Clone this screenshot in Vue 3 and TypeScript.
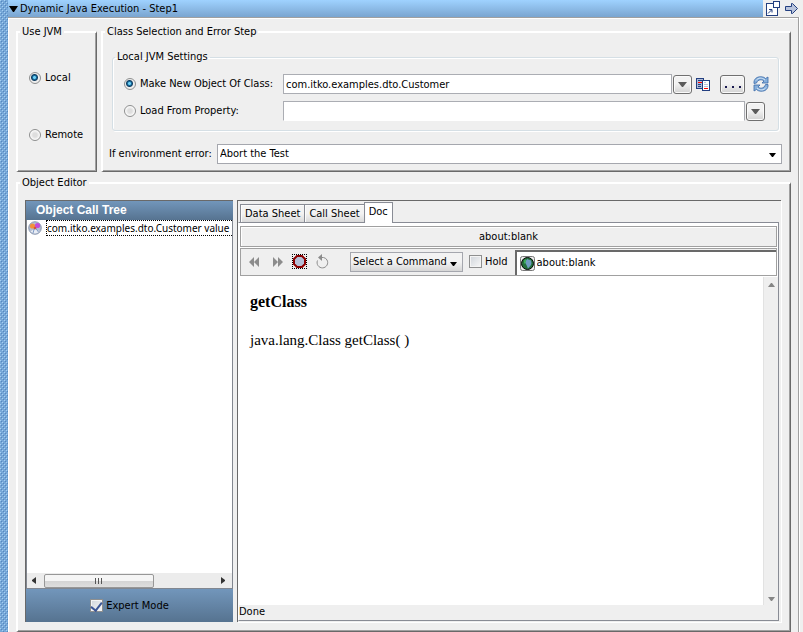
<script setup lang="ts">
import { ref } from 'vue'

type Jvm = 'local' | 'remote'
type Source = 'class' | 'property'

const jvm = ref<Jvm>('local')
const source = ref<Source>('class')
const className = ref('com.itko.examples.dto.Customer')
const property = ref('')
const onError = ref('Abort the Test')
const tabs = ['Data Sheet', 'Call Sheet', 'Doc']
const activeTab = ref('Doc')
const command = ref('Select a Command')
const hold = ref(false)
const address = ref('about:blank')
const expert = ref(true)
</script>

<template>
  <div class="window">
    <div class="grip"></div>
    <div class="step">
      <header class="titlebar">
        <h1 class="title">
          <svg class="caret" viewBox="0 0 9 6"><path d="M0 0h9L5 6H4z" fill="#000" /></svg>
          Dynamic Java Execution - Step1
        </h1>
        <div class="window-tools">
          <button class="plain" type="button" aria-label="Pop out">
            <svg width="14" height="15" viewBox="0 0 14 15">
              <rect x="0.5" y="2.5" width="11" height="12" fill="#fff" stroke="#233f80" />
              <rect x="7.5" y="0.5" width="6" height="6" fill="#fff" stroke="#233f80" />
              <path d="M2 12.5 5.5 9M3 8.5h3v3" fill="none" stroke="#233f80" />
            </svg>
          </button>
          <button class="plain" type="button" aria-label="Next">
            <svg width="13" height="11" viewBox="0 0 13 11">
              <path d="M.5 3.5h6v-3h1l5 5-5 5h-1v-3h-6z" fill="#b9c4dc" stroke="#233f80" />
            </svg>
          </button>
        </div>
      </header>

      <main class="body">
        <div class="settings">
          <fieldset class="group jvm">
            <legend>Use JVM</legend>
            <label class="choice"><input v-model="jvm" type="radio" name="jvm" value="local" />Local</label>
            <label class="choice"><input v-model="jvm" type="radio" name="jvm" value="remote" />Remote</label>
          </fieldset>

          <fieldset class="group selection">
            <legend>Class Selection and Error Step</legend>
            <fieldset class="local">
              <legend>Local JVM Settings</legend>
              <div class="row">
                <label class="choice"><input v-model="source" type="radio" name="source" value="class" />Make New Object Of Class:</label>
                <input v-model="className" class="field" type="text" aria-label="Class name" />
                <button class="square" type="button" aria-label="Choose class">
                  <svg width="9" height="5" viewBox="0 0 9 5"><path d="M0 0h9L5 5H4z" fill="#5a5a5a" /></svg>
                </button>
                <button class="plain compare" type="button" aria-label="Browse classes">
                  <svg width="14" height="13" viewBox="0 0 14 13">
                    <rect x="0.5" y="0.5" width="7" height="10" fill="#aebbd8" stroke="#233f80" />
                    <path d="M2 2.5h4M2 6.5h3M2 8.5h3" stroke="#233f80" />
                    <path d="M2 4.5h4" stroke="#f00" />
                    <rect x="6.5" y="2.5" width="7" height="10" fill="#fff" stroke="#233f80" />
                    <path d="M8 4.500h2M8 6.500h4M8 8.500h4" stroke="#b9c4dc" />
                    <path d="M8 10.500h4" stroke="#f00" />
                  </svg>
                </button>
                <button class="square more" type="button" aria-label="More">
                  <svg width="16" height="2" viewBox="0 0 16 2"><path d="M0 0h2v2H0zM7 0h2v2H7zM14 0h2v2h-2z" fill="#1a1a50" /></svg>
                </button>
                <button class="plain refresh" type="button" aria-label="Refresh">
                  <svg width="16" height="16" viewBox="0 0 16 16">
                    <path d="M1 7.500C.5 3 4 .5 8 .8c2 0 3.500.7 4.500 1.700L15 1v6H9l2-2C9 3.200 5 3 3.500 7z" fill="#86afdb" stroke="#3a6aa8" stroke-width=".8" />
                    <path d="M15 8.500c.5 4.500-3 7-7 6.700-2 0-3.500-.7-4.500-1.700L1 15V9h6l-2 2c2 1.800 6 2 7.500-2.500z" fill="#86afdb" stroke="#3a6aa8" stroke-width=".8" />
                    <path d="M3 4.500C5 1.500 9 1.300 12 4M13 11.500C11 14.500 7 14.700 4 12" fill="none" stroke="#d3e5f6" />
                  </svg>
                </button>
              </div>
              <div class="row second">
                <label class="choice"><input v-model="source" type="radio" name="source" value="property" />Load From Property:</label>
                <input v-model="property" class="field open" type="text" aria-label="Property" />
                <button class="square" type="button" aria-label="Choose property">
                  <svg width="9" height="5" viewBox="0 0 9 5"><path d="M0 0h9L5 5H4z" fill="#5a5a5a" /></svg>
                </button>
              </div>
            </fieldset>
            <div class="error-row">
              <label for="on-error">If environment error:</label>
              <div class="combo">
                <select id="on-error" v-model="onError"><option>Abort the Test</option></select>
                <svg class="arrow" width="7" height="4" viewBox="0 0 7 4"><path d="M0 0h7L4 4H3z" /></svg>
              </div>
            </div>
          </fieldset>
        </div>

        <fieldset class="group editor">
          <legend>Object Editor</legend>
          <div class="panes">
            <section class="tree-pane">
              <h2 class="tree-head">Object Call Tree</h2>
              <div class="tree">
                <div class="node">
                  <svg width="14" height="14" viewBox="0 0 14 14">
                    <circle cx="7" cy="7" r="6.300" fill="#b4bed2" stroke="#7686a2" stroke-width=".8" />
                    <path d="M2.500 10.500q4.500-4 9 0-4.500 4-9 0" fill="#e9edf5" />
                    <path d="M6.500 7 5 12M7.500 7l3 4" stroke="#7b99c5" fill="none" />
                    <circle cx="4.500" cy="5" r="2.600" fill="#f2913c" />
                    <circle cx="9.500" cy="4.500" r="2.600" fill="#c34bd8" />
                    <path d="m5.500 7 1.500-1.500L8.500 7 7 8.500z" fill="#d64b2c" />
                  </svg>
                  <span class="node-name">com.itko.examples.dto.Customer value</span>
                </div>
              </div>
              <div class="hscroll">
                <svg width="4" height="7" viewBox="0 0 4 7"><path d="M4 0v7L0 4V3z" fill="#333" /></svg>
                <div class="thumb">
                  <svg width="8" height="6" viewBox="0 0 8 6"><path d="M.5 0v6M3.500 0v6M6.500 0v6" stroke="#555" /></svg>
                </div>
                <svg width="4" height="7" viewBox="0 0 4 7"><path d="M0 0v7l4-3V3z" fill="#333" /></svg>
              </div>
              <div class="expert">
                <label class="check"><input v-model="expert" type="checkbox" />Expert Mode</label>
              </div>
            </section>

            <section class="doc-pane">
              <div class="tabs" role="tablist">
                <button
                  v-for="tab in tabs"
                  :key="tab"
                  type="button"
                  role="tab"
                  class="tab"
                  :class="{ active: tab === activeTab }"
                  :aria-selected="tab === activeTab"
                  @click="activeTab = tab"
                >{{ tab }}</button>
              </div>
              <div class="browser">
                <div class="page-title">about:blank</div>
                <div class="toolbar">
                  <div class="nav">
                    <button class="plain" type="button" aria-label="Back">
                      <svg width="10" height="10" viewBox="0 0 10 10"><path d="M5 0v10L0 5zM10 0v10L5 5z" fill="#8c8c8c" /></svg>
                    </button>
                    <button class="plain" type="button" aria-label="Forward">
                      <svg width="10" height="10" viewBox="0 0 10 10"><path d="M0 0v10l5-5zM5 0v10l5-5z" fill="#8c8c8c" /></svg>
                    </button>
                    <button class="plain stop" type="button" aria-label="Stop">
                      <svg width="15" height="15" viewBox="0 0 15 15">
                        <path d="M0 .5h15M0 14.500h15M.5 0v15M14.500 0v15" fill="none" stroke="#000" stroke-dasharray="1 1" />
                        <path d="M5 2h5l3 3v5l-3 3H5l-3-3V5z" fill="#b4bfd6" stroke="#8b0000" stroke-width="2" />
                      </svg>
                    </button>
                    <button class="plain" type="button" aria-label="Reload">
                      <svg width="13" height="15" viewBox="0 0 13 15">
                        <path d="M1.500 6.500A5.300 5.300 0 1 0 11 6Q10 4 7.500 3.500H5" fill="none" stroke="#8c8c8c" />
                        <path d="M6 0v7L2 3.500z" fill="#8c8c8c" />
                      </svg>
                    </button>
                  </div>
                  <div class="combo command">
                    <select v-model="command" aria-label="Command"><option>Select a Command</option></select>
                    <svg class="arrow" width="7" height="4" viewBox="0 0 7 4"><path d="M0 0h7L4 4H3z" /></svg>
                  </div>
                  <label class="check"><input v-model="hold" type="checkbox" />Hold</label>
                  <div class="address">
                    <svg width="15" height="15" viewBox="0 0 15 15">
                      <rect x=".5" y=".5" width="14" height="14" rx="2" fill="#eee" stroke="#777" />
                      <circle cx="7.500" cy="7.500" r="6" fill="#23703c" stroke="#000" />
                      <path d="M7 3 11 4.500 11.500 7 11 9l-3 3.500L6.500 9 5 6.500z" fill="#6f9bc0" />
                      <path d="M4 4.500 6 3v3L4 8z" fill="#3fae5b" />
                    </svg>
                    <input v-model="address" type="text" aria-label="Address" />
                  </div>
                </div>
                <div class="view">
                  <article class="doc">
                    <h3>getClass</h3>
                    <p>java.lang.Class getClass( )</p>
                  </article>
                  <div class="vscroll">
                    <svg width="7" height="4" viewBox="0 0 7 4"><path d="M3 0h1l3 4H0z" fill="#858585" /></svg>
                    <svg width="7" height="4" viewBox="0 0 7 4"><path d="M0 0h7L4 4H3z" fill="#858585" /></svg>
                  </div>
                </div>
                <footer class="status">Done</footer>
              </div>
            </section>
          </div>
        </fieldset>
      </main>
    </div>
  </div>
</template>

<style>
body {
  background: #efefef;
}
</style>

<style scoped>
.window,
.window * {
  box-sizing: border-box;
}
.window {
  display: flex;
  min-height: 100vh;
  font-family: "DejaVu Sans Condensed", "Noto Sans", sans-serif;
  font-size: 11px;
  line-height: 14px;
  color: #000;
}
h1, h2, h3, p {
  margin: 0;
}
svg {
  display: block;
  flex: none;
}
input, select, button {
  font: inherit;
  color: inherit;
  margin: 0;
}
input[type="text"] {
  min-width: 0;
}
.grip {
  flex: 0 0 8px;
  background-color: #76a7d8;
  background-image:
    conic-gradient(at 1px 1px, transparent 75%, #a5d0f2 0),
    conic-gradient(at 1px 1px, transparent 75%, #5589be 0),
    conic-gradient(at 1px 1px, transparent 75%, #a5d0f2 0),
    conic-gradient(at 1px 1px, transparent 75%, #5589be 0);
  background-size: 4px 4px;
  background-position: 0 0, 1px 1px, 2px 2px, 3px 3px;
}
.step {
  flex: 1;
  min-width: 0;
  display: flex;
  flex-direction: column;
}
.titlebar {
  display: flex;
  height: 17px;
}
.title {
  flex: 1;
  display: flex;
  align-items: center;
  gap: 2px;
  padding-left: 1px;
  font-size: 11px;
  font-weight: normal;
  line-height: 17px;
  background: linear-gradient(#9fd2ff, #7aa5d0);
}
.caret {
  width: 9px;
  height: 6px;
}
.window-tools {
  display: flex;
  align-items: center;
  gap: 5px;
  padding: 0 5px 0 3px;
}
.plain {
  padding: 0;
  border: 0;
  background: none;
}
.body {
  flex: 1;
  display: flex;
  flex-direction: column;
  gap: 4px;
  margin-right: 4px;
  padding: 7px 7px 0 8px;
  border: solid #a0a0a0;
  border-width: 1px 1px 0 0;
  box-shadow: inset 1px 1px #fff, 1px 0 #fff;
}
.settings {
  display: flex;
  gap: 4px;
}
fieldset {
  min-width: 0;
  margin: 0;
  padding: 0;
}
legend {
  margin-left: calc(2px - var(--inset));
  padding: 0 2px;
  line-height: 14px;
}
.group {
  border: 2px solid #fff;
  border-right: 1px solid #696969;
  border-bottom: 1px solid #696969;
  box-shadow: inset -1px -1px #a0a0a0;
}
.jvm {
  --inset: 11px;
  flex: 0 0 81px;
  display: flex;
  flex-direction: column;
  padding: 32px 0 0 var(--inset);
  gap: 43px;
}
.choice {
  display: flex;
  align-items: center;
  gap: 4px;
  white-space: nowrap;
}
.choice input {
  appearance: none;
  width: 12px;
  height: 12px;
  border: 1px solid #8e8f8f;
  border-radius: 50%;
  background: radial-gradient(#dedede 0 2px, #fff 5px);
}
.choice input:checked {
  background: radial-gradient(circle at 45% 45%, #6fd1f5 0 1px, #156a9d 2px, #123e60 3px, #eee 4px);
}
.selection {
  --inset: 9px;
  flex: 1;
  padding: 11px 11px 7px var(--inset);
}
.local {
  --inset: 11px;
  border: 1px solid #d5dfe5;
  border-radius: 3px;
  box-shadow: 1px 1px #fff, inset 1px 1px #fff;
  padding: 10px 9px 9px var(--inset);
}
.row {
  display: flex;
  align-items: center;
}
.row .choice {
  flex: 0 0 159px;
}
.second {
  margin-top: 7px;
  padding-right: 4px;
}
.field {
  flex: 1;
  height: 20px;
  padding: 0 2px;
  border: 1px solid #abadb3;
  background: #fff;
}
.open {
  border-bottom-color: #fff;
}
.square {
  display: flex;
  align-items: center;
  justify-content: center;
  width: 19px;
  height: 19px;
  margin-left: 1px;
  padding: 0;
  border: 1px solid #707070;
  border-radius: 3px;
  background: linear-gradient(#f2f2f2 45%, #d2d2d2);
  box-shadow: inset 0 0 0 1px #fafafa;
}
.compare {
  margin: 0 10px 0 4px;
}
.more {
  width: 25px;
  margin-left: 0;
  padding-top: 6px;
}
.refresh {
  margin-left: 8px;
}
.error-row {
  display: flex;
  align-items: center;
  margin: 13px -3px 0 -3px;
}
.error-row label {
  flex: 0 0 108px;
  white-space: nowrap;
}
.combo {
  position: relative;
  flex: 1;
}
.combo select {
  display: block;
  appearance: none;
  width: 100%;
  height: 20px;
  padding: 0 14px 0 2px;
  border: 1px solid #a5a7ae;
  border-radius: 0;
  background: #fff;
}
.arrow {
  position: absolute;
  right: 6px;
  top: 9px;
  pointer-events: none;
}
.editor {
  --inset: 7px;
  flex: 1;
  display: flex;
  flex-direction: column;
  padding: 10px 9px 9px var(--inset);
}
.panes {
  flex: 1;
  display: flex;
  gap: 4px;
}
.tree-pane {
  flex: 0 0 208px;
  min-width: 0;
  display: flex;
  flex-direction: column;
  border-left: 1px solid #696969;
  border-top: 1px solid #696969;
}
.tree-head {
  padding-left: 10px;
  font: bold 12px/19px "Liberation Sans", sans-serif;
  color: #fff;
  background: linear-gradient(#7296bb, #567390);
}
.tree {
  flex: 1;
  padding-left: 1px;
  border: solid #828790;
  border-width: 0 1px;
  background: #fff;
}
.node {
  display: flex;
  align-items: center;
  gap: 4px;
}
.node-name {
  flex: 1;
  min-width: 0;
  overflow: hidden;
  white-space: nowrap;
  border: 1px dotted #000;
  border-right: 0;
  font-family: "Noto Sans", sans-serif;
  font-size: 10px;
}
.hscroll {
  display: flex;
  align-items: center;
  height: 16px;
  padding: 0 7px 0 5px;
  border: solid #828790;
  border-width: 0 1px 1px;
  background: #ececec;
}
.thumb {
  display: flex;
  align-items: center;
  justify-content: center;
  width: 110px;
  height: 14px;
  margin: 0 auto 0 8px;
  border: 1px solid #979797;
  border-radius: 2px;
  background: linear-gradient(#f5f5f5 50%, #d4d4d4 50%, #dedede);
}
.expert {
  display: flex;
  align-items: center;
  justify-content: center;
  height: 33px;
  background: linear-gradient(#7296bb, #567390);
}
.check {
  display: flex;
  align-items: center;
  gap: 3px;
  white-space: nowrap;
}
.check input {
  appearance: none;
  display: flex;
  justify-content: center;
  width: 13px;
  height: 13px;
  border: 1px solid #8e8f8f;
  background: linear-gradient(135deg, #cfd4da, #f8f8f8);
  box-shadow: inset 0 0 0 1px #f4f4f4;
}
.check input:checked::after {
  content: "";
  width: 5px;
  height: 9px;
  border: solid #3b5696;
  border-width: 0 2px 2px 0;
  transform: rotate(38deg);
}
.doc-pane {
  flex: 1;
  min-width: 0;
  display: flex;
  flex-direction: column;
  border: solid #696969;
  border-width: 1px 0 0 1px;
  box-shadow: 1px 1px #fff;
}
.tabs {
  display: flex;
  align-items: flex-end;
  height: 21px;
  padding-left: 2px;
}
.tab {
  height: 18px;
  padding: 0 4px;
  border: 1px solid #898c95;
  border-right-width: 0;
  border-bottom: 0;
  background: linear-gradient(#f3f3f3 50%, #dadada);
  box-shadow: inset 1px 1px #fcfcfc;
  line-height: 16px;
  white-space: nowrap;
}
.tab.active {
  position: relative;
  z-index: 1;
  height: 21px;
  margin-bottom: -1px;
  border-right-width: 1px;
  padding-bottom: 2px;
  background: #fff;
}
.browser {
  flex: 1;
  display: flex;
  flex-direction: column;
  margin: 0 2px 1px 0;
  border: 1px solid #898c95;
  border-left-color: #fff;
  background: #fff;
}
.page-title {
  margin: 3px 1px 1px;
  border: 1px solid #a0a0a0;
  background: #efefef;
  box-shadow: inset 1px 1px #fff;
  line-height: 19px;
  text-align: center;
}
.toolbar {
  display: flex;
  align-items: center;
  height: 28px;
  margin: 0 1px;
  padding: 0 0 1px 8px;
  border: 1px solid #a0a0a0;
  background: #efefef;
}
.nav {
  display: flex;
  align-items: center;
  gap: 14px;
  margin-right: 21px;
}
.stop {
  margin: 0 -5px;
}
.command {
  flex: 0 0 113px;
  margin-right: 6px;
}
.command select {
  background: linear-gradient(#f3f3f3 50%, #d6d6d6);
}
.command .arrow {
  top: 10px;
}
.address {
  flex: 1;
  align-self: stretch;
  display: flex;
  align-items: center;
  gap: 2px;
  min-width: 0;
  margin: 1px 0 -1px 7px;
  padding: 0 0 1px 3px;
  border: solid #696969;
  border-width: 2px 0 0 2px;
  background: #fff;
}
.address input {
  flex: 1;
  padding: 0;
  border: 0;
  background: none;
}
.view {
  flex: 1;
  display: flex;
}
.doc {
  flex: 1;
  padding: 17px 11px;
  font: 15px/18px "Liberation Serif", serif;
}
.doc h3 {
  margin-bottom: 20px;
  font-size: 16px;
}
.vscroll {
  display: flex;
  flex-direction: column;
  align-items: center;
  justify-content: space-between;
  width: 15px;
  margin-top: 1px;
  padding: 6px 0 4px;
  border-left: 1px solid #e2e2e2;
  background: #efefef;
}
.status {
  height: 15px;
  background: #efefef;
}
</style>
